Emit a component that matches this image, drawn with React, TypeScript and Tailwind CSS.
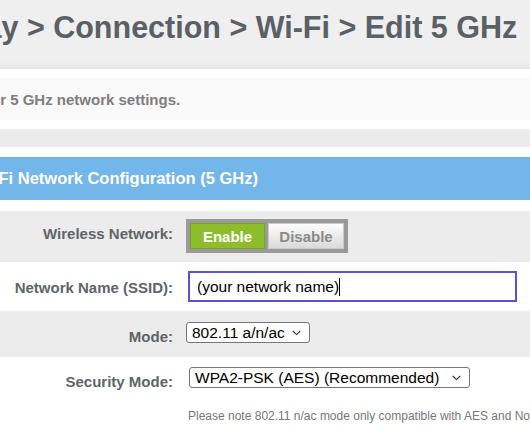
import React from 'react';

function Chevron() {
  return (
    <svg width="9" height="6" viewBox="0 0 9 6" fill="none" className="shrink-0">
      <path d="M0.8 1l3.7 3.6L8.2 1" stroke="#333" strokeWidth="1.1" />
    </svg>
  );
}

function Select({ value, className }: { value: string; className: string }) {
  return (
    <div
      className={`flex items-center justify-between h-[21px] border border-[#767676] rounded-[3px] bg-white pl-[5px] pr-[8px] text-[15.5px] leading-none text-black ${className}`}
    >
      <span className="whitespace-nowrap">{value}</span>
      <Chevron />
    </div>
  );
}

function Label({ children, pt }: { children: React.ReactNode; pt: string }) {
  return (
    <div className={`w-[173px] shrink-0 text-right text-[15px] leading-[15px] font-bold text-[#5f6469] whitespace-nowrap ${pt}`}>
      {children}
    </div>
  );
}

export default function App() {
  return (
    <div className="w-[530px] h-[442px] overflow-hidden bg-white font-['Liberation_Sans',Arial,sans-serif]">
      {/* breadcrumb title */}
      <div className="h-[62px] bg-[#efefef] pt-[12px] overflow-hidden">
        <div className="-ml-[107px] whitespace-nowrap text-[30.5px] leading-[31px] font-bold text-[#596066]">
          Gateway &gt; Connection &gt; Wi-Fi &gt; Edit 5 GHz
        </div>
      </div>
      <div className="h-[7px] bg-gradient-to-b from-[#efefef] to-[#e5e5e5]" />

      {/* description */}
      <div className="pt-[9px] pb-[9px]">
        <div className="h-[42px] bg-[#f9f9f9] flex items-center overflow-hidden">
          <span className="-ml-[59px] whitespace-nowrap text-[15px] leading-[15px] font-bold text-[#7e7e7e]">
            Edit your 5 GHz network settings.
          </span>
        </div>
      </div>
      <div className="h-[18px] bg-[#ebebeb]" />

      {/* section header */}
      <div className="pt-[10px] pb-[11px]">
        <div className="h-[43px] bg-[#73b6ea] flex items-center overflow-hidden">
          <span className="-ml-[27px] whitespace-nowrap text-[16.5px] leading-[16.5px] font-bold text-white">
            Wi-Fi Network Configuration (5 GHz)
          </span>
        </div>
      </div>

      {/* wireless network */}
      <div className="h-[51px] bg-[#ececec] flex items-start">
        <Label pt="pt-[15px]">Wireless Network:</Label>
        <div className="ml-[13px] mt-[8px] flex gap-[3px] bg-[#9a9a9a] p-[4px]">
          <div className="w-[75px] h-[26px] flex items-center justify-center bg-[#8dbd2a] border border-[#76a322] text-white text-[15px] font-bold leading-none">
            Enable
          </div>
          <div className="w-[76px] h-[26px] flex items-center justify-center bg-gradient-to-b from-[#fdfdfd] to-[#dadada] border border-[#c9c9c9] text-[#8a8a8a] text-[15px] font-bold leading-none">
            Disable
          </div>
        </div>
      </div>

      {/* ssid */}
      <div className="h-[49px] bg-white flex items-start">
        <Label pt="pt-[18px]">Network Name (SSID):</Label>
        <div className="ml-[15px] mt-[9px] w-[329px] h-[31px] border-2 border-[#5b50d8] flex items-center pl-[7px] text-[15.5px] leading-none text-black">
          <span className="whitespace-nowrap">(your network name)</span>
          <span className="w-px h-[18px] bg-black" />
        </div>
      </div>

      {/* mode */}
      <div className="h-[46px] bg-[#ececec] flex items-start">
        <Label pt="pt-[18px]">Mode:</Label>
        <Select value="802.11 a/n/ac" className="ml-[13px] mt-[11px] w-[124px]" />
      </div>

      {/* security */}
      <div className="bg-white flex items-start">
        <Label pt="pt-[17px]">Security Mode:</Label>
        <div className="ml-[16px] pt-[10px] flex flex-col">
          <Select value="WPA2-PSK (AES) (Recommended)" className="w-[281px]" />
          <div className="mt-[22px] -ml-px whitespace-nowrap text-[12px] leading-[12px] text-[#777]">
            Please note 802.11 n/ac mode only compatible with AES and No Security.
          </div>
        </div>
      </div>
    </div>
  );
}
